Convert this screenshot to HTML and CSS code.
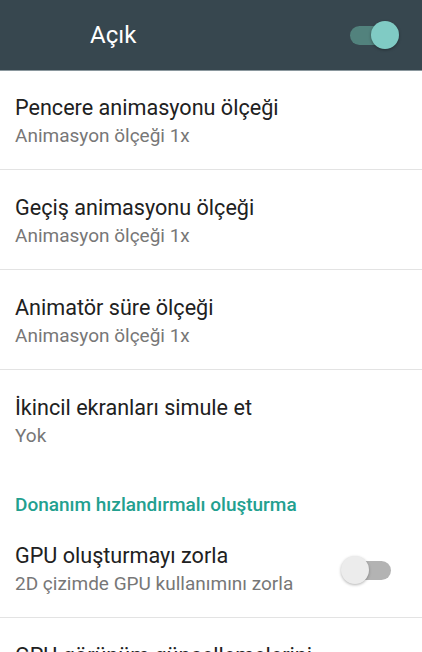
FILE: index.html
```html
<!DOCTYPE html>
<html lang="tr">
<head>
<meta charset="utf-8">
<title>Geliştirici seçenekleri</title>
<link rel="stylesheet" href="styles.css">
</head>
<body>
<header class="master-bar">
  <span class="master-title">Açık</span>
  <span class="switch switch-on"><span class="track"></span><span class="thumb"></span></span>
</header>
<main class="list">
  <div class="pref">
    <div class="pref-text">
      <div class="pref-title">Pencere animasyonu ölçeği</div>
      <div class="pref-summary">Animasyon ölçeği 1x</div>
    </div>
  </div>
  <div class="divider"></div>
  <div class="pref">
    <div class="pref-text">
      <div class="pref-title">Geçiş animasyonu ölçeği</div>
      <div class="pref-summary">Animasyon ölçeği 1x</div>
    </div>
  </div>
  <div class="divider"></div>
  <div class="pref">
    <div class="pref-text">
      <div class="pref-title">Animatör süre ölçeği</div>
      <div class="pref-summary">Animasyon ölçeği 1x</div>
    </div>
  </div>
  <div class="divider"></div>
  <div class="pref">
    <div class="pref-text">
      <div class="pref-title">İkincil ekranları simule et</div>
      <div class="pref-summary">Yok</div>
    </div>
  </div>
  <div class="category">Donanım hızlandırmalı oluşturma</div>
  <div class="pref">
    <div class="pref-text">
      <div class="pref-title">GPU oluşturmayı zorla</div>
      <div class="pref-summary">2D çizimde GPU kullanımını zorla</div>
    </div>
    <span class="switch switch-off"><span class="track"></span><span class="thumb"></span></span>
  </div>
  <div class="divider"></div>
  <div class="pref">
    <div class="pref-text">
      <div class="pref-title">GPU görünüm güncellemelerini göster</div>
    </div>
    <span class="switch switch-off"><span class="track"></span><span class="thumb"></span></span>
  </div>
</main>
</body>
</html>
```
FILE: styles.css
```css
html, body {
  margin: 0;
  padding: 0;
  background: #ffffff;
}
body {
  width: 422px;
  height: 652px;
  overflow: hidden;
  font-family: Roboto, "Noto Sans", "Liberation Sans", sans-serif;
}
.master-bar {
  height: 70px;
  background: #37474f;
  display: flex;
  align-items: center;
  padding: 0 23px 0 90px;
  justify-content: space-between;
  border-bottom: 1px solid #8a979d;
  box-sizing: content-box;
}
.master-title {
  color: #ffffff;
  font-size: 24px;
  line-height: 28px;
  margin-top: -1px;
}
.list {
  display: flex;
  flex-direction: column;
}
.pref {
  display: flex;
  align-items: center;
  padding: 24px 24px 19px 15px;
  min-height: 56px;
}
.list > .pref:first-child {
  padding-top: 23px;
}
.pref-text {
  flex: 1;
  min-width: 0;
  align-self: flex-start;
}
.pref-title {
  font-size: 21.6px;
  line-height: 28px;
  color: #212121;
}
.pref-summary {
  font-size: 19px;
  line-height: 28px;
  color: #777777;
}
.divider {
  height: 1px;
  background: #e3e3e3;
}
.category {
  font-size: 19px;
  font-weight: 500;
  color: #22a08f;
  line-height: 20px;
  padding: 26px 15px 3px;
}
.switch {
  position: relative;
  width: 57px;
  height: 28px;
  flex: none;
  margin-left: 8px;
}
.switch .track {
  position: absolute;
  left: 8px;
  top: 4.5px;
  width: 42px;
  height: 19px;
  border-radius: 10px;
}
.switch .thumb {
  position: absolute;
  top: 0;
  width: 28px;
  height: 28px;
  border-radius: 50%;
}
.switch-on .track {
  background: #52827d;
  width: 46px;
}
.switch-on .thumb {
  right: 0;
  background: #80cbc4;
  box-shadow: 0 1px 3px rgba(0, 0, 0, 0.35);
}
.switch-off .track {
  background: #b3b3b3;
}
.switch-off .thumb {
  left: 0;
  background: #ececec;
  box-shadow: 0 1px 3px rgba(0, 0, 0, 0.3);
}
```
